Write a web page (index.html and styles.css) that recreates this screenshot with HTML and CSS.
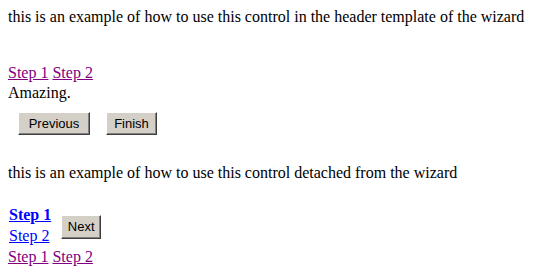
FILE: index.html
```html
<!DOCTYPE html>
<html>
<head>
<meta charset="utf-8">
<link rel="stylesheet" href="styles.css">
</head>
<body>
<div class="intro">this is an example of how to use this control in the header template of the wizard</div>
<div class="nav-inline"><a class="visited" href="#">Step 1</a> <a class="visited" href="#">Step 2</a></div>
<div class="step-body">Amazing.</div>
<div class="button-row">
  <button class="btn btn-prev">Previous</button>
  <button class="btn btn-finish">Finish</button>
</div>
<div class="intro intro-second">this is an example of how to use this control detached from the wizard</div>
<div class="wizard2">
  <div class="step-list">
    <div class="step-row"><a class="link current" href="#">Step 1</a></div>
    <div class="step-row"><a class="link" href="#">Step 2</a></div>
  </div>
  <button class="btn btn-next">Next</button>
</div>
<div class="nav-inline nav-bottom"><a class="visited" href="#">Step 1</a> <a class="visited" href="#">Step 2</a></div>
</body>
</html>
```
FILE: styles.css
```css
html, body {
  background: #ffffff;
}
body {
  margin: 8px;
  font-family: "Times New Roman", "Liberation Serif", "DejaVu Serif", serif;
  font-size: 16px;
  color: #000000;
}
a {
  text-decoration: underline;
}
.visited {
  color: #800080;
}
.link {
  color: #0000ff;
}
.current {
  font-weight: bold;
}
.nav-inline {
  margin-top: 38px;
}
.step-body {
  margin-top: 2px;
}
.button-row {
  display: flex;
  gap: 16px;
  padding-left: 10px;
  margin-top: 10px;
}
.btn {
  box-sizing: border-box;
  height: 23px;
  padding: 0;
  font-family: "Liberation Sans", Arial, sans-serif;
  font-size: 13px;
  color: #000000;
  background: #d4d0c8;
  border: 1px solid;
  border-color: #ffffff #404040 #404040 #ffffff;
  box-shadow: inset -1px -1px 0 #808080, inset 1px 1px 0 #d4d0c8;
  border-radius: 0;
  text-align: center;
}
.btn-prev { width: 72px; }
.btn-finish { width: 51px; }
.btn-next { width: 40px; height: 24px; margin-left: 9px; }
.intro-second {
  margin-top: 29px;
}
.wizard2 {
  display: flex;
  align-items: center;
  margin-top: 23px;
}
.step-list {
  padding: 0 1px 1px 1px;
}
.step-row {
  height: 19px;
  padding: 1px 0;
}
.nav-bottom {
  margin-top: 0;
}
```
